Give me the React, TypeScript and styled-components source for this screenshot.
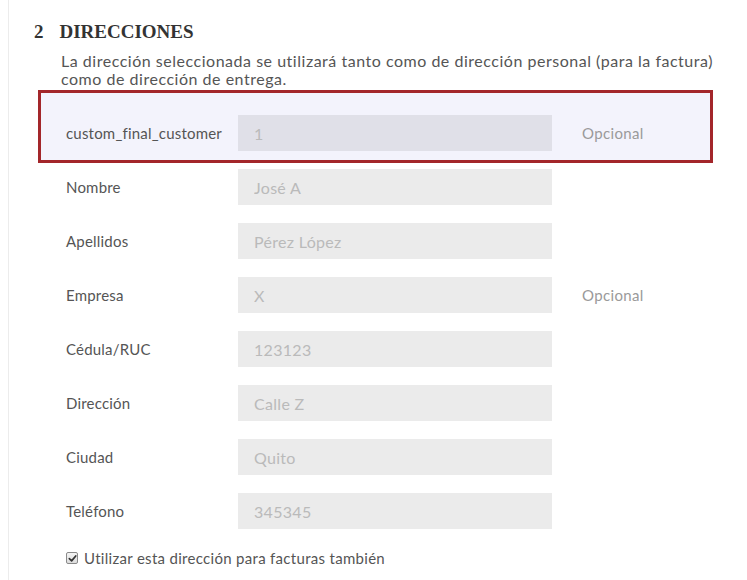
import React from "react";
import styled, { createGlobalStyle } from "styled-components";

const Global = createGlobalStyle`
  html, body { margin: 0; padding: 0; background: #ffffff; }
  body { font-family: "Lato", "Open Sans", sans-serif; }
  * { box-sizing: border-box; }
`;

const Section = styled.section`
  margin-left: 8px;
  border-left: 1px solid #ececec;
  min-height: 580px;
  padding-top: 20px;
`;

const Heading = styled.h2`
  display: flex;
  align-items: baseline;
  gap: 16px;
  margin: 0 0 8px 0;
  padding-left: 25px;
  font-family: "Liberation Serif", serif;
  font-weight: 700;
  font-size: 19px;
  line-height: 24px;
  color: #333333;
  letter-spacing: 0;
`;

const Description = styled.p`
  margin: 0 0 2px 0;
  padding-left: 52px;
  width: 712px;
  font-size: 16px;
  line-height: 18px;
  color: #555555;
  letter-spacing: 0.52px;
`;

const Form = styled.div`
  padding-left: 29px;
  display: flex;
  flex-direction: column;
`;

const Row = styled.div<{ $highlight?: boolean }>`
  width: 675px;
  display: grid;
  grid-template-columns: 172px 314px 1fr;
  align-items: center;
  border: 3px solid ${(p) => (p.$highlight ? "#a3262a" : "transparent")};
  background: ${(p) => (p.$highlight ? "#f3f3fc" : "transparent")};
  padding: ${(p) => (p.$highlight ? "22px 0 9px 25px" : "0 0 0 25px")};
  margin-bottom: ${(p) => (p.$highlight ? "3px" : "12px")};
`;

const Label = styled.label`
  font-size: 15px;
  color: #555555;
  letter-spacing: 0.2px;
`;

const Field = styled.input`
  height: 36px;
  width: 314px;
  border: none;
  outline: none;
  background: rgba(0, 0, 0, 0.08);
  padding: 0 16px;
  font-family: "Lato", "Open Sans", sans-serif;
  font-size: 16px;
  color: #bababa;
  letter-spacing: 0.3px;
`;

const Hint = styled.span`
  padding-left: 30px;
  font-size: 15px;
  color: #9a9a9a;
  letter-spacing: 0.35px;
`;

const CheckLine = styled.label`
  display: flex;
  align-items: center;
  gap: 6px;
  margin-top: 1px;
  padding-left: 28px;
  height: 26px;
  font-size: 15px;
  color: #555555;
  letter-spacing: 0.3px;
`;

const Box = styled.span`
  width: 12px;
  height: 12px;
  border: 1px solid #8a8a8a;
  border-radius: 2px;
  background: linear-gradient(#f4f4f4, #dcdcdc);
  display: inline-flex;
  align-items: center;
  justify-content: center;
`;

const fields: { label: string; value: string; optional?: boolean; highlight?: boolean }[] = [
  { label: "custom_final_customer", value: "1", optional: true, highlight: true },
  { label: "Nombre", value: "José A" },
  { label: "Apellidos", value: "Pérez López" },
  { label: "Empresa", value: "X", optional: true },
  { label: "Cédula/RUC", value: "123123" },
  { label: "Dirección", value: "Calle Z" },
  { label: "Ciudad", value: "Quito" },
  { label: "Teléfono", value: "345345" },
];

export default function App() {
  return (
    <>
      <Global />
      <Section>
        <Heading>
          <span>2</span>
          <span>DIRECCIONES</span>
        </Heading>
        <Description>
          La dirección seleccionada se utilizará tanto como de dirección personal (para la factura) como de dirección de entrega.
        </Description>
        <Form>
          {fields.map((f) => (
            <Row key={f.label} $highlight={f.highlight}>
              <Label>{f.label}</Label>
              <Field value={f.value} readOnly />
              <Hint>{f.optional ? "Opcional" : ""}</Hint>
            </Row>
          ))}
          <CheckLine>
            <Box>
              <svg width="9" height="9" viewBox="0 0 10 10">
                <path d="M1.5 5.2 L4 7.6 L8.6 2.2" fill="none" stroke="#333" strokeWidth="1.9" strokeLinecap="round" strokeLinejoin="round" />
              </svg>
            </Box>
            Utilizar esta dirección para facturas también
          </CheckLine>
        </Form>
      </Section>
    </>
  );
}
